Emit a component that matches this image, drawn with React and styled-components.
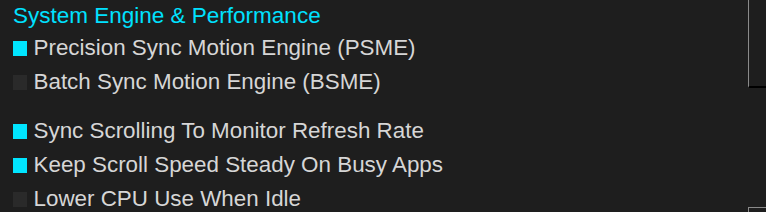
import React from 'react'
import styled, { createGlobalStyle } from 'styled-components'

const Global = createGlobalStyle`
html, body {
  margin: 0;
  padding: 0;
  background: #1e1e1e;
}
`

const groups = [
  [
    { label: 'Precision Sync Motion Engine (PSME)', on: true },
    { label: 'Batch Sync Motion Engine (BSME)', on: false },
  ],
  [
    { label: 'Sync Scrolling To Monitor Refresh Rate', on: true },
    { label: 'Keep Scroll Speed Steady On Busy Apps', on: true },
    { label: 'Lower CPU Use When Idle', on: false },
  ],
]

export default function App() {
  return (
    <Page>
      <Global />
      <Content>
        <Title>System Engine &amp; Performance</Title>
        {groups.map((group, gi) => (
          <Group key={gi}>
            {group.map(item => (
              <Row key={item.label}>
                <Box on={item.on ? 1 : 0} />
                <Label>{item.label}</Label>
              </Row>
            ))}
          </Group>
        ))}
      </Content>
      <Scrollbar>
        <Thumb />
        <Lower />
      </Scrollbar>
    </Page>
  )
}

const Page = styled.div`
width:766px;
height:212px;
display:flex;
overflow:hidden;
background:#1e1e1e;
font-family:"Liberation Sans", Arial, sans-serif;
`
const Content = styled.div`
flex:1;
padding-left:13px;
display:flex;
flex-direction:column;
gap:15px;
`
const Title = styled.div`
height:32px;
line-height:31px;
font-size:22.5px;
color:#00e1ff;
margin-bottom:-15px;
`
const Group = styled.div`
display:flex;
flex-direction:column;
`
const Row = styled.div`
height:34px;
display:flex;
align-items:center;
gap:6.5px;
`
const Box = styled.div`
width:14px;
height:15px;
margin-top:1px;
background:${props => props.on ? '#00e5ff' : '#2a2a2a'};
`
const Label = styled.div`
font-size:22.4px;
line-height:34px;
color:#d6d6d6;
margin-top:-1px;
`
const Scrollbar = styled.div`
width:19px;
display:flex;
flex-direction:column;
justify-content:space-between;
`
const Thumb = styled.div`
height:86px;
border-left:1px solid #8a8a8a;
border-bottom:2px solid #000;
margin-left:1px;
`
const Lower = styled.div`
height:4px;
border-left:1px solid #8a8a8a;
border-top:1px solid #8a8a8a;
margin-left:1px;
`
